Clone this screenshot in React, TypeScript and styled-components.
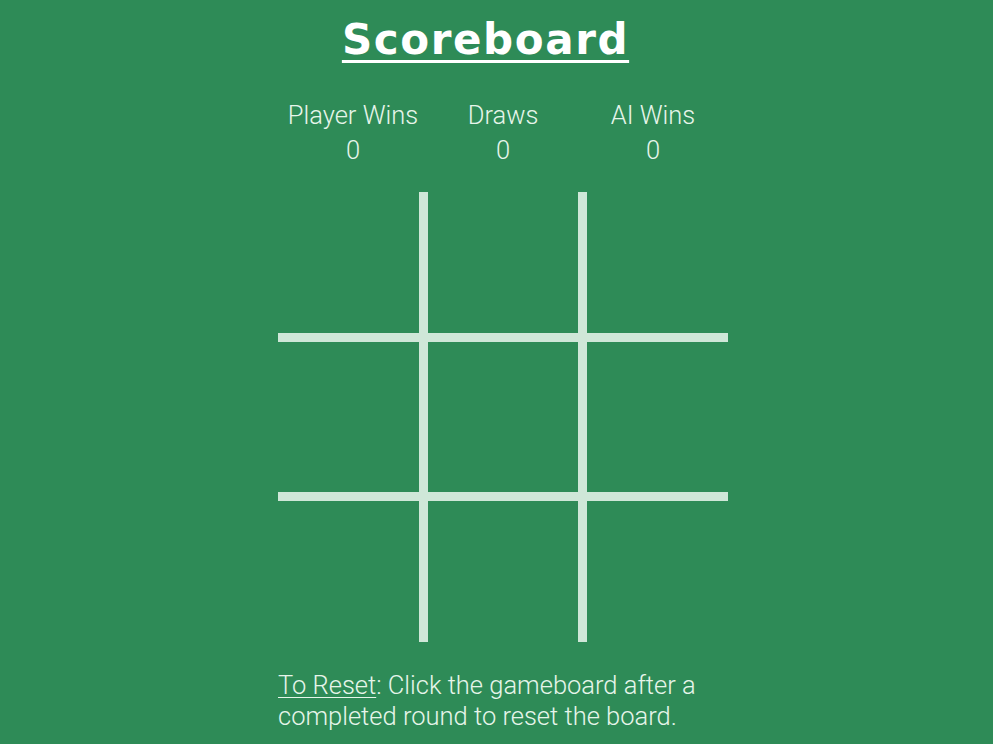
import styled, { createGlobalStyle } from 'styled-components';

const Global = createGlobalStyle`
  html, body {
    margin: 0;
    background: #2e8b57;
  }
  body {
    font-family: Roboto, 'Noto Sans', sans-serif;
    font-weight: 300;
    color: #e6f5ea;
  }
`;

const Page = styled.div`
  padding-left: 13px;
  display: flex;
  justify-content: center;
`;

const Column = styled.div`
  width: 450px;
  display: flex;
  flex-direction: column;
`;

const Title = styled.h1`
  margin: 0;
  padding: 16px 35px 0 0;
  height: 78px;
  box-sizing: border-box;
  text-align: center;
  font-family: 'Comic Sans MS', 'DejaVu Sans', sans-serif;
  font-weight: bold;
  font-size: 42px;
  line-height: 48px;
  letter-spacing: 1.6px;
  color: #ffffff;
  text-decoration: underline;
  text-decoration-thickness: 3px;
  text-underline-offset: 6px;
`;

const Scores = styled.div`
  display: grid;
  grid-template-columns: repeat(3, 150px);
  margin-top: 20px;
  height: 94px;
`;

const Score = styled.div`
  text-align: center;
  font-size: 25.5px;
  line-height: 35px;
`;

const Board = styled.div`
  display: grid;
  grid-template-columns: repeat(3, 150px);
  grid-template-rows: repeat(3, 150px);
  margin-bottom: 28px;
`;

const Cell = styled.div<{ $col: number; $row: number }>`
  box-sizing: border-box;
  border-color: #cfe7d8;
  border-style: solid;
  border-width: 0;
  ${(p) => (p.$col === 0 ? 'border-right-width: 9px;' : '')}
  ${(p) => (p.$col === 2 ? 'border-left-width: 9px;' : '')}
  ${(p) => (p.$row === 0 ? 'border-bottom-width: 9px;' : '')}
  ${(p) => (p.$row === 2 ? 'border-top-width: 9px;' : '')}
`;

const Note = styled.p`
  margin: 0;
  font-size: 25.5px;
  line-height: 31px;
`;

const Underlined = styled.span`
  text-decoration: underline;
  text-decoration-thickness: 1px;
  text-underline-offset: 3px;
`;

const scores = [
  { label: 'Player Wins', value: 0 },
  { label: 'Draws', value: 0 },
  { label: 'AI Wins', value: 0 },
];

export default function App() {
  return (
    <>
      <Global />
      <Page>
        <Column>
          <Title>Scoreboard</Title>
          <Scores>
            {scores.map((s) => (
              <Score key={s.label}>
                <div>{s.label}</div>
                <div>{s.value}</div>
              </Score>
            ))}
          </Scores>
          <Board>
            {Array.from({ length: 9 }, (_, i) => (
              <Cell key={i} $col={i % 3} $row={Math.floor(i / 3)} />
            ))}
          </Board>
          <Note>
            <Underlined>To Reset</Underlined>: Click the gameboard after a completed round to reset the board.
          </Note>
        </Column>
      </Page>
    </>
  );
}
